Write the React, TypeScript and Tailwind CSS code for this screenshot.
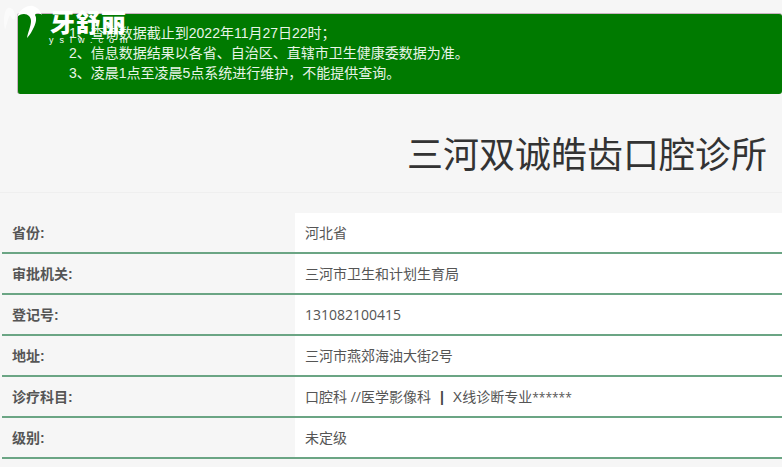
const FONT = "font-['Liberation_Sans','Noto_Sans_CJK_SC',sans-serif]";

const rows: [string, React.ReactNode][] = [
  ["省份:", "河北省"],
  ["审批机关:", "三河市卫生和计划生育局"],
  ["登记号:", <span className="font-['Open_Sans',sans-serif]">131082100415</span>],
  ["地址:", "三河市燕郊海油大街2号"],
  [
    "诊疗科目:",
    <>
      <span className="font-['Open_Sans','Noto_Sans_CJK_SC',sans-serif]">口腔科 //医学影像科</span>
      <span className="mx-[9px] font-bold text-[#444444]">|</span>
      X线诊断专业
      <span className="font-['Open_Sans',sans-serif] text-[12px]">******</span>
    </>,
  ],
  ["级别:", "未定级"],
];

function Logo() {
  return (
    <div className="absolute left-0 top-0 h-[46px] w-[135px] text-white">
      <svg className="absolute left-0 top-0" width="46" height="42" viewBox="0 0 46 42" fill="#ffffff">
        <path d="M5 30C3 20 4 10 8 8C12 7 15 11 15 17C14 22 12 19 10 15C8 18 7 24 5 30Z" fillOpacity="0.6" />
        <path d="M17 17C20 9 27 5 33 6C37 7 40 10 42 15C38 12 36 13 35 15C37 18 36 23 34 27C32 31 30 35 27 38C28 32 31 26 31 21C31 17 28 14 24 14C21 14 19 15 17 17Z" />
      </svg>
      <div className="absolute left-[50px] top-[6px] font-['Noto_Sans_CJK_SC',sans-serif] text-[25px] leading-[30px] font-black tracking-[0.5px] whitespace-nowrap">
        牙舒丽
      </div>
      <div className="absolute left-[49px] top-[35px] text-[9px] leading-[10px] text-white tracking-[6px] whitespace-nowrap font-['Liberation_Sans',sans-serif]">
        yslw.com
      </div>
    </div>
  );
}

export default function App() {
  return (
    <div className={`relative h-[467px] w-[782px] overflow-hidden bg-[#f6f6f6] ${FONT}`}>
      <Logo />
      <div className="pt-[13px] pl-[17px]">
        <div className="h-[81px] rounded-[3px] border-t border-l border-[#c9b3c0] bg-[#007a00] pt-[9px] pl-[51px] text-[14px] leading-[20px] text-[#e8f4e8]">
          <p>1、查询数据截止到2022年11月27日22时；</p>
          <p>2、信息数据结果以各省、自治区、直辖市卫生健康委数据为准。</p>
          <p>3、凌晨1点至凌晨5点系统进行维护，不能提供查询。</p>
        </div>
      </div>
      <div className="mt-[31px] h-[68px] border-b border-[#efefef] pr-[15px] text-right text-[36px] leading-[62px] text-[#333333]">
        三河双诚皓齿口腔诊所
      </div>
      <div className="mt-[20px] pl-[2px]">
        {rows.map(([label, value]) => (
          <div key={label} className="flex h-[41px] border-b-2 border-[#6ba584]">
            <div className="flex w-[293px] items-center pl-[10px] pt-px text-[14px] font-bold text-[#555555]">{label}</div>
            <div className="flex flex-1 items-center bg-white pl-[10px] pt-px text-[14px] text-[#555555]">
              <span>{value}</span>
            </div>
          </div>
        ))}
      </div>
    </div>
  );
}
